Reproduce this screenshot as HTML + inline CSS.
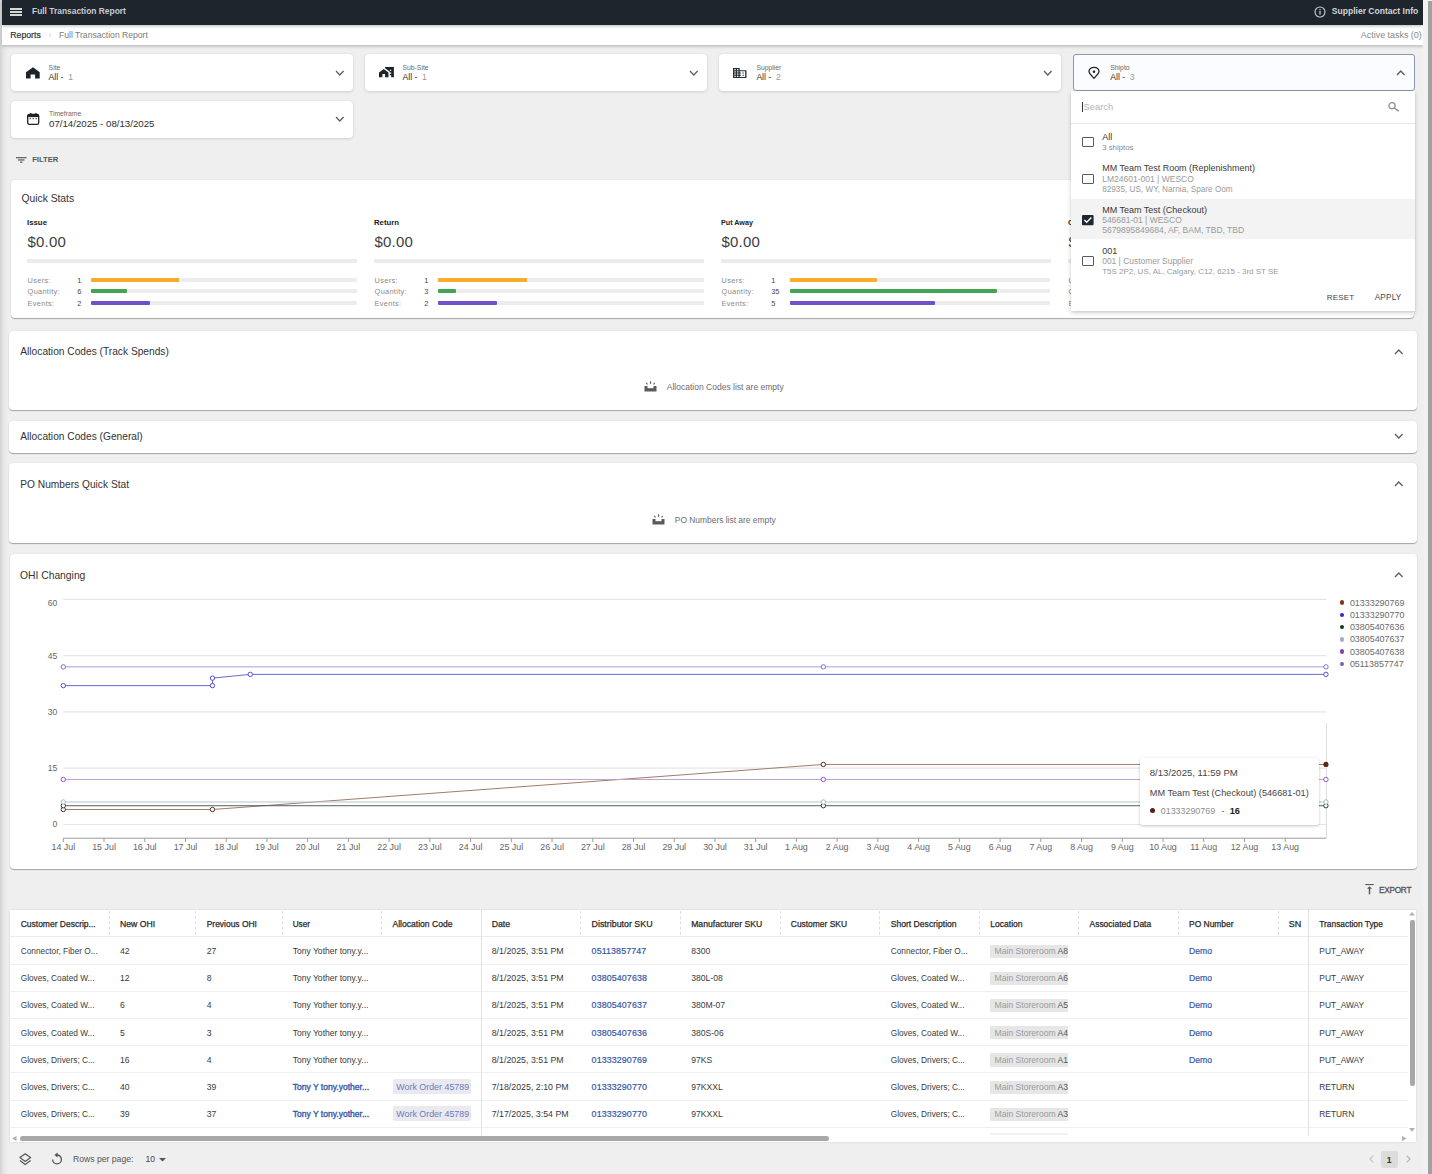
<!DOCTYPE html><html><head><meta charset="utf-8"><style>
*{box-sizing:border-box}
html,body{margin:0;padding:0}
body{width:1432px;height:1174px;overflow:hidden;position:relative;background:#efefef;font-family:"Liberation Sans",sans-serif}
.t{position:absolute;line-height:1;white-space:nowrap}
.r{position:absolute}
.card{position:absolute;background:#fff;border-radius:4px;box-shadow:0 1px 3px rgba(0,0,0,.13),0 0 1.5px rgba(0,0,0,.07)}
.pan{position:absolute;background:#fff;border-radius:4px;box-shadow:0 1px 1px rgba(0,0,0,.30),0 0 2px rgba(0,0,0,.08)}
svg{position:absolute;overflow:visible}
</style></head><body>
<div class="r" style="left:0.00px;top:0.00px;width:9.00px;height:1174.00px;background:linear-gradient(to right,#d2d2d2 0,#dedede 2px,#e8e8e8 4.5px,#eeeeee 8px,#efefef 9px)"></div>
<div class="r" style="left:2.00px;top:24.50px;width:1421.00px;height:20.40px;background:#fff;box-shadow:0 1.5px 3px rgba(0,0,0,.22)"></div>
<div class="r" style="left:2.00px;top:0.00px;width:1421.00px;height:24.50px;background:#1f252d;box-shadow:0 1px 3px rgba(0,0,0,.28)"></div>
<div class="r" style="left:10.20px;top:8.40px;width:11.80px;height:1.60px;background:#d6d8da"></div>
<div class="r" style="left:10.20px;top:11.20px;width:11.80px;height:1.60px;background:#d6d8da"></div>
<div class="r" style="left:10.20px;top:14.00px;width:11.80px;height:1.60px;background:#d6d8da"></div>
<div class="t " style="left:32.00px;top:7.00px;font-size:8.42px;color:#c9cbcd;font-weight:700;">Full Transaction Report</div>
<svg style="left:1314px;top:5.5px" width="12" height="12" viewBox="0 0 12 12"><circle cx="6" cy="6" r="5" fill="none" stroke="#cfd1d3" stroke-width="1.1"/><rect x="5.4" y="5" width="1.2" height="3.6" fill="#cfd1d3"/><rect x="5.4" y="3.2" width="1.2" height="1.1" fill="#cfd1d3"/></svg>
<div class="t " style="left:1331.80px;top:7.00px;font-size:8.56px;color:#d2d4d6;font-weight:700;">Supplier Contact Info</div>
<div class="t " style="left:10.30px;top:31.00px;font-size:8.71px;color:#333;-webkit-text-stroke:0.2px #333">Reports</div>
<div class="t " style="left:48.50px;top:31.00px;font-size:8.5px;color:#c8c8c8;">&rsaquo;</div>
<div class="t " style="left:59.00px;top:31.00px;font-size:8.61px;color:#7a7a7a;">Full Transaction Report</div>
<div class="t " style="right:10.30px;top:31.00px;font-size:8.92px;color:#8a8a8a;">Active tasks (0)</div>
<div class="r" style="left:1423.00px;top:0.00px;width:9.00px;height:1174.00px;background:#f1f1f1"></div>
<div class="r" style="left:1428.20px;top:1.00px;width:3.80px;height:1173.00px;background:#a0a0a0"></div>
<div class="card" style="left:10.80px;top:54px;width:342.5px;height:37px"></div>
<div class="t " style="left:48.60px;top:65.00px;font-size:6.8px;color:#6a6a6a;">Site</div>
<div class="t" style="left:48.60px;top:73px;font-size:8.6px;color:#2e2e2e">All - <span style="color:#9a9a9a">&nbsp;1</span></div>
<svg style="left:334.20px;top:69.00px" width="11.6" height="8.0" viewBox="-5.8 -4.0 11.6 8.0"><path d="M-3.8,-2.0 L0,2.0 L3.8,-2.0" fill="none" stroke="#606060" stroke-width="1.35"/></svg>
<div class="card" style="left:364.70px;top:54px;width:342.5px;height:37px"></div>
<div class="t " style="left:402.50px;top:65.00px;font-size:6.8px;color:#6a6a6a;">Sub-Site</div>
<div class="t" style="left:402.50px;top:73px;font-size:8.6px;color:#2e2e2e">All - <span style="color:#9a9a9a">&nbsp;1</span></div>
<svg style="left:688.10px;top:69.00px" width="11.6" height="8.0" viewBox="-5.8 -4.0 11.6 8.0"><path d="M-3.8,-2.0 L0,2.0 L3.8,-2.0" fill="none" stroke="#606060" stroke-width="1.35"/></svg>
<div class="card" style="left:718.60px;top:54px;width:342.5px;height:37px"></div>
<div class="t " style="left:756.40px;top:65.00px;font-size:6.8px;color:#6a6a6a;">Supplier</div>
<div class="t" style="left:756.40px;top:73px;font-size:8.6px;color:#2e2e2e">All - <span style="color:#9a9a9a">&nbsp;2</span></div>
<svg style="left:1042.00px;top:69.00px" width="11.6" height="8.0" viewBox="-5.8 -4.0 11.6 8.0"><path d="M-3.8,-2.0 L0,2.0 L3.8,-2.0" fill="none" stroke="#606060" stroke-width="1.35"/></svg>
<div class="card" style="left:1072.50px;top:54.2px;width:342.2px;height:36.4px;border:1.2px solid #8f96b0;background:#fbfcff;box-shadow:none;border-radius:3px"></div>
<div class="t " style="left:1110.30px;top:65.00px;font-size:6.8px;color:#6a6a6a;">Shipto</div>
<div class="t" style="left:1110.30px;top:73px;font-size:8.6px;color:#2e2e2e">All - <span style="color:#9a9a9a">&nbsp;3</span></div>
<svg style="left:1395.20px;top:68.80px" width="11.6" height="8.0" viewBox="-5.8 -4.0 11.6 8.0"><path d="M-3.8,2.0 L0,-2.0 L3.8,2.0" fill="none" stroke="#606060" stroke-width="1.35"/></svg>
<svg style="left:26px;top:66.5px" width="14" height="12" viewBox="0 0 14 12"><path d="M7,0.2 L13.7,5.2 L13.7,11.6 L9.1,11.6 L9.1,7.6 L4.6,7.6 L4.6,11.6 L0,11.6 L0,5.2 Z" fill="#1e232b"/></svg>
<svg style="left:378.6px;top:67.3px" width="14.9" height="10.3" viewBox="1 3 22 15.2" preserveAspectRatio="none"><path d="M1 11v7.2h5v-5h4v5h5V11L8 6z M10 3v1.97l7 5V11h2v2h-2v2h2v3.2h4V3H10zm9 6h-2V7h2v2z" fill="#1e232b"/></svg>
<svg style="left:733px;top:67.7px" width="13.5" height="10" viewBox="2 3 20 18" preserveAspectRatio="none"><path d="M12 7V3H2v18h20V7H12zM6 19H4v-2h2v2zm0-4H4v-2h2v2zm0-4H4V9h2v2zm0-4H4V5h2v2zm4 12H8v-2h2v2zm0-4H8v-2h2v2zm0-4H8V9h2v2zm0-4H8V5h2v2zm10 12h-8v-2h2v-2h-2v-2h2v-2h-2V9h8v10zm-2-8h-2v2h2v-2zm0 4h-2v2h2v-2z" fill="#2a2f36"/></svg>
<svg style="left:1088.2px;top:66.5px" width="12" height="12" viewBox="0 0 12 12"><path d="M6,11.3 C3.4,8.6 1,6.5 1,4.6 A5,4.3 0 0 1 11,4.6 C11,6.5 8.6,8.6 6,11.3 Z" fill="none" stroke="#222" stroke-width="1.3"/><circle cx="6" cy="4.7" r="1.25" fill="#222"/></svg>
<div class="card" style="left:10.8px;top:101px;width:342.5px;height:37px"></div>
<svg style="left:26.8px;top:113px" width="12.5" height="12" viewBox="0 0 12.5 12"><rect x="0.7" y="1.5" width="11" height="9.8" rx="1.6" fill="none" stroke="#222" stroke-width="1.3"/><rect x="0.7" y="1.5" width="11" height="2.6" fill="#222"/><rect x="3" y="0" width="1.4" height="2" fill="#222"/><rect x="8.2" y="0" width="1.4" height="2" fill="#222"/><rect x="2.5" y="5.2" width="1.4" height="1" fill="#333"/><rect x="5.5" y="5.2" width="1.4" height="1" fill="#333"/><rect x="8.5" y="5.2" width="1.4" height="1" fill="#333"/></svg>
<div class="t " style="left:49.00px;top:111.00px;font-size:6.8px;color:#6a6a6a;">Timeframe</div>
<div class="t " style="left:49.00px;top:119.00px;font-size:9.68px;color:#2e2e2e;">07/14/2025 - 08/13/2025</div>
<svg style="left:334.20px;top:115.30px" width="11.6" height="8.0" viewBox="-5.8 -4.0 11.6 8.0"><path d="M-3.8,-2.0 L0,2.0 L3.8,-2.0" fill="none" stroke="#606060" stroke-width="1.35"/></svg>
<svg style="left:15.6px;top:156.6px" width="10.5" height="6" viewBox="0 0 10.5 6"><rect x="0" y="0" width="10.5" height="1.3" fill="#666"/><rect x="2" y="2.3" width="6.5" height="1.3" fill="#666"/><rect x="4" y="4.5" width="2.5" height="1.3" fill="#666"/></svg>
<div class="t " style="left:32.20px;top:156.00px;font-size:7.6px;color:#555;font-weight:700;">FILTER</div>
<div class="pan" style="left:10.7px;top:180.4px;width:1403.7px;height:137.6px"></div>
<div class="t " style="left:21.50px;top:194.00px;font-size:10.29px;color:#333;">Quick Stats</div>
<div class="t " style="left:27.00px;top:219.00px;font-size:7.82px;color:#222;font-weight:700;">Issue</div>
<div class="t " style="left:27.40px;top:234.00px;font-size:15.0px;color:#3d3d3d;letter-spacing:0.25px">$0.00</div>
<div class="r" style="left:27.00px;top:258.80px;width:329.50px;height:3.80px;background:#ebebeb"></div>
<div class="t " style="left:27.60px;top:277.00px;font-size:7.4px;color:#8a8a8a;letter-spacing:0.3px">Users:</div>
<div class="t " style="left:77.20px;top:277.00px;font-size:7.4px;color:#444;">1</div>
<div class="r" style="left:91.00px;top:277.90px;width:265.50px;height:4.10px;background:#ececec;border-radius:1px"></div>
<div class="r" style="left:91.00px;top:277.90px;width:88.00px;height:4.10px;background:#f7ad2a;border-radius:1px"></div>
<div class="t " style="left:27.60px;top:288.00px;font-size:7.4px;color:#8a8a8a;letter-spacing:0.3px">Quantity:</div>
<div class="t " style="left:77.20px;top:288.00px;font-size:7.4px;color:#444;">6</div>
<div class="r" style="left:91.00px;top:289.40px;width:265.50px;height:4.10px;background:#ececec;border-radius:1px"></div>
<div class="r" style="left:91.00px;top:289.40px;width:36.00px;height:4.10px;background:#43a553;border-radius:1px"></div>
<div class="t " style="left:27.60px;top:300.00px;font-size:7.4px;color:#8a8a8a;letter-spacing:0.3px">Events:</div>
<div class="t " style="left:77.20px;top:300.00px;font-size:7.4px;color:#444;">2</div>
<div class="r" style="left:91.00px;top:300.90px;width:265.50px;height:4.10px;background:#ececec;border-radius:1px"></div>
<div class="r" style="left:91.00px;top:300.90px;width:58.50px;height:4.10px;background:#6f52c9;border-radius:1px"></div>
<div class="t " style="left:374.00px;top:219.00px;font-size:7.76px;color:#222;font-weight:700;">Return</div>
<div class="t " style="left:374.40px;top:234.00px;font-size:15.0px;color:#3d3d3d;letter-spacing:0.25px">$0.00</div>
<div class="r" style="left:374.00px;top:258.80px;width:329.50px;height:3.80px;background:#ebebeb"></div>
<div class="t " style="left:374.60px;top:277.00px;font-size:7.4px;color:#8a8a8a;letter-spacing:0.3px">Users:</div>
<div class="t " style="left:424.20px;top:277.00px;font-size:7.4px;color:#444;">1</div>
<div class="r" style="left:438.00px;top:277.90px;width:265.50px;height:4.10px;background:#ececec;border-radius:1px"></div>
<div class="r" style="left:438.00px;top:277.90px;width:89.00px;height:4.10px;background:#f7ad2a;border-radius:1px"></div>
<div class="t " style="left:374.60px;top:288.00px;font-size:7.4px;color:#8a8a8a;letter-spacing:0.3px">Quantity:</div>
<div class="t " style="left:424.20px;top:288.00px;font-size:7.4px;color:#444;">3</div>
<div class="r" style="left:438.00px;top:289.40px;width:265.50px;height:4.10px;background:#ececec;border-radius:1px"></div>
<div class="r" style="left:438.00px;top:289.40px;width:18.00px;height:4.10px;background:#43a553;border-radius:1px"></div>
<div class="t " style="left:374.60px;top:300.00px;font-size:7.4px;color:#8a8a8a;letter-spacing:0.3px">Events:</div>
<div class="t " style="left:424.20px;top:300.00px;font-size:7.4px;color:#444;">2</div>
<div class="r" style="left:438.00px;top:300.90px;width:265.50px;height:4.10px;background:#ececec;border-radius:1px"></div>
<div class="r" style="left:438.00px;top:300.90px;width:59.40px;height:4.10px;background:#6f52c9;border-radius:1px"></div>
<div class="t " style="left:721.00px;top:219.00px;font-size:7.2px;color:#222;font-weight:700;">Put Away</div>
<div class="t " style="left:721.40px;top:234.00px;font-size:15.0px;color:#3d3d3d;letter-spacing:0.25px">$0.00</div>
<div class="r" style="left:721.00px;top:258.80px;width:329.50px;height:3.80px;background:#ebebeb"></div>
<div class="t " style="left:721.60px;top:277.00px;font-size:7.4px;color:#8a8a8a;letter-spacing:0.3px">Users:</div>
<div class="t " style="left:771.20px;top:277.00px;font-size:7.4px;color:#444;">1</div>
<div class="r" style="left:789.90px;top:277.90px;width:260.60px;height:4.10px;background:#ececec;border-radius:1px"></div>
<div class="r" style="left:789.90px;top:277.90px;width:86.90px;height:4.10px;background:#f7ad2a;border-radius:1px"></div>
<div class="t " style="left:721.60px;top:288.00px;font-size:7.4px;color:#8a8a8a;letter-spacing:0.3px">Quantity:</div>
<div class="t " style="left:771.20px;top:288.00px;font-size:7.4px;color:#444;">35</div>
<div class="r" style="left:789.90px;top:289.40px;width:260.60px;height:4.10px;background:#ececec;border-radius:1px"></div>
<div class="r" style="left:789.90px;top:289.40px;width:207.60px;height:4.10px;background:#43a553;border-radius:1px"></div>
<div class="t " style="left:721.60px;top:300.00px;font-size:7.4px;color:#8a8a8a;letter-spacing:0.3px">Events:</div>
<div class="t " style="left:771.20px;top:300.00px;font-size:7.4px;color:#444;">5</div>
<div class="r" style="left:789.90px;top:300.90px;width:260.60px;height:4.10px;background:#ececec;border-radius:1px"></div>
<div class="r" style="left:789.90px;top:300.90px;width:144.80px;height:4.10px;background:#6f52c9;border-radius:1px"></div>
<div class="t " style="left:1068.00px;top:219.00px;font-size:7.5px;color:#222;font-weight:700;">Check Out</div>
<div class="t " style="left:1068.40px;top:234.00px;font-size:15.0px;color:#3d3d3d;letter-spacing:0.25px">$0.00</div>
<div class="r" style="left:1068.00px;top:258.80px;width:329.50px;height:3.80px;background:#ebebeb"></div>
<div class="t " style="left:1068.60px;top:277.00px;font-size:7.4px;color:#8a8a8a;letter-spacing:0.3px">Users:</div>
<div class="t " style="left:1118.20px;top:277.00px;font-size:7.4px;color:#444;">1</div>
<div class="r" style="left:1132.00px;top:277.90px;width:265.50px;height:4.10px;background:#ececec;border-radius:1px"></div>
<div class="r" style="left:1132.00px;top:277.90px;width:88.00px;height:4.10px;background:#f7ad2a;border-radius:1px"></div>
<div class="t " style="left:1068.60px;top:288.00px;font-size:7.4px;color:#8a8a8a;letter-spacing:0.3px">Quantity:</div>
<div class="t " style="left:1118.20px;top:288.00px;font-size:7.4px;color:#444;">0</div>
<div class="r" style="left:1132.00px;top:289.40px;width:265.50px;height:4.10px;background:#ececec;border-radius:1px"></div>
<div class="t " style="left:1068.60px;top:300.00px;font-size:7.4px;color:#8a8a8a;letter-spacing:0.3px">Events:</div>
<div class="t " style="left:1118.20px;top:300.00px;font-size:7.4px;color:#444;">0</div>
<div class="r" style="left:1132.00px;top:300.90px;width:265.50px;height:4.10px;background:#ececec;border-radius:1px"></div>
<div class="pan" style="left:9.1px;top:330.7px;width:1407.6px;height:79.20px"></div>
<div class="t " style="left:20.30px;top:347.00px;font-size:10.2px;color:#333;">Allocation Codes (Track Spends)</div>
<svg style="left:1392.70px;top:347.60px" width="11.6" height="8.0" viewBox="-5.8 -4.0 11.6 8.0"><path d="M-3.8,2.0 L0,-2.0 L3.8,2.0" fill="none" stroke="#606060" stroke-width="1.35"/></svg>
<div class="pan" style="left:9.1px;top:421.0px;width:1407.6px;height:31.70px"></div>
<div class="t " style="left:20.30px;top:432.00px;font-size:10.2px;color:#333;">Allocation Codes (General)</div>
<svg style="left:1392.70px;top:432.20px" width="11.6" height="8.0" viewBox="-5.8 -4.0 11.6 8.0"><path d="M-3.8,-2.0 L0,2.0 L3.8,-2.0" fill="none" stroke="#606060" stroke-width="1.35"/></svg>
<div class="pan" style="left:9.1px;top:463.3px;width:1407.6px;height:79.80px"></div>
<div class="t " style="left:20.30px;top:480.00px;font-size:10.2px;color:#333;">PO Numbers Quick Stat</div>
<svg style="left:1392.70px;top:480.20px" width="11.6" height="8.0" viewBox="-5.8 -4.0 11.6 8.0"><path d="M-3.8,2.0 L0,-2.0 L3.8,2.0" fill="none" stroke="#606060" stroke-width="1.35"/></svg>
<svg style="left:644.2px;top:381.2px" width="13" height="11" viewBox="0 0 13 11"><path d="M0.5,5 L12.5,5 L12.5,10.5 L0.5,10.5 Z" fill="#5a5a5a"/><path d="M3.5,5 L3.5,7.2 L9.5,7.2 L9.5,5" fill="#fff"/><rect x="6" y="0.3" width="1.1" height="2.6" fill="#5a5a5a"/><rect x="2.3" y="1.6" width="1.1" height="2.1" fill="#5a5a5a" transform="rotate(-30 2.8 2.6)"/><rect x="9.6" y="1.6" width="1.1" height="2.1" fill="#5a5a5a" transform="rotate(30 10.1 2.6)"/></svg>
<div class="t " style="left:666.80px;top:383.00px;font-size:8.52px;color:#6e6e6e;">Allocation Codes list are empty</div>
<svg style="left:652px;top:514.2px" width="13" height="11" viewBox="0 0 13 11"><path d="M0.5,5 L12.5,5 L12.5,10.5 L0.5,10.5 Z" fill="#5a5a5a"/><path d="M3.5,5 L3.5,7.2 L9.5,7.2 L9.5,5" fill="#fff"/><rect x="6" y="0.3" width="1.1" height="2.6" fill="#5a5a5a"/><rect x="2.3" y="1.6" width="1.1" height="2.1" fill="#5a5a5a" transform="rotate(-30 2.8 2.6)"/><rect x="9.6" y="1.6" width="1.1" height="2.1" fill="#5a5a5a" transform="rotate(30 10.1 2.6)"/></svg>
<div class="t " style="left:674.80px;top:516.00px;font-size:8.41px;color:#6e6e6e;">PO Numbers list are empty</div>
<div class="pan" style="left:9.5px;top:554px;width:1407.2px;height:315.1px"></div>
<div class="t " style="left:20.00px;top:571.00px;font-size:10.32px;color:#333;">OHI Changing</div>
<svg style="left:1392.70px;top:570.80px" width="11.6" height="8.0" viewBox="-5.8 -4.0 11.6 8.0"><path d="M-3.8,2.0 L0,-2.0 L3.8,2.0" fill="none" stroke="#606060" stroke-width="1.35"/></svg>
<svg style="left:0;top:0" width="1432" height="1174" viewBox="0 0 1432 1174"><line x1="63.3" y1="824.50" x2="1326.4" y2="824.50" stroke="#e6e6e6" stroke-width="1.2"/><line x1="63.3" y1="768.20" x2="1326.4" y2="768.20" stroke="#e6e6e6" stroke-width="1.2"/><line x1="63.3" y1="711.90" x2="1326.4" y2="711.90" stroke="#e6e6e6" stroke-width="1.2"/><line x1="63.3" y1="655.60" x2="1326.4" y2="655.60" stroke="#e6e6e6" stroke-width="1.2"/><line x1="63.3" y1="599.30" x2="1326.4" y2="599.30" stroke="#e6e6e6" stroke-width="1.2"/><line x1="63.3" y1="838.2" x2="1326.4" y2="838.2" stroke="#9a9a9a" stroke-width="1"/><line x1="63.30" y1="838.2" x2="63.30" y2="842" stroke="#9a9a9a" stroke-width="1"/><line x1="104.03" y1="838.2" x2="104.03" y2="842" stroke="#9a9a9a" stroke-width="1"/><line x1="144.76" y1="838.2" x2="144.76" y2="842" stroke="#9a9a9a" stroke-width="1"/><line x1="185.49" y1="838.2" x2="185.49" y2="842" stroke="#9a9a9a" stroke-width="1"/><line x1="226.22" y1="838.2" x2="226.22" y2="842" stroke="#9a9a9a" stroke-width="1"/><line x1="266.95" y1="838.2" x2="266.95" y2="842" stroke="#9a9a9a" stroke-width="1"/><line x1="307.68" y1="838.2" x2="307.68" y2="842" stroke="#9a9a9a" stroke-width="1"/><line x1="348.41" y1="838.2" x2="348.41" y2="842" stroke="#9a9a9a" stroke-width="1"/><line x1="389.14" y1="838.2" x2="389.14" y2="842" stroke="#9a9a9a" stroke-width="1"/><line x1="429.87" y1="838.2" x2="429.87" y2="842" stroke="#9a9a9a" stroke-width="1"/><line x1="470.60" y1="838.2" x2="470.60" y2="842" stroke="#9a9a9a" stroke-width="1"/><line x1="511.33" y1="838.2" x2="511.33" y2="842" stroke="#9a9a9a" stroke-width="1"/><line x1="552.06" y1="838.2" x2="552.06" y2="842" stroke="#9a9a9a" stroke-width="1"/><line x1="592.79" y1="838.2" x2="592.79" y2="842" stroke="#9a9a9a" stroke-width="1"/><line x1="633.52" y1="838.2" x2="633.52" y2="842" stroke="#9a9a9a" stroke-width="1"/><line x1="674.25" y1="838.2" x2="674.25" y2="842" stroke="#9a9a9a" stroke-width="1"/><line x1="714.98" y1="838.2" x2="714.98" y2="842" stroke="#9a9a9a" stroke-width="1"/><line x1="755.71" y1="838.2" x2="755.71" y2="842" stroke="#9a9a9a" stroke-width="1"/><line x1="796.44" y1="838.2" x2="796.44" y2="842" stroke="#9a9a9a" stroke-width="1"/><line x1="837.17" y1="838.2" x2="837.17" y2="842" stroke="#9a9a9a" stroke-width="1"/><line x1="877.90" y1="838.2" x2="877.90" y2="842" stroke="#9a9a9a" stroke-width="1"/><line x1="918.63" y1="838.2" x2="918.63" y2="842" stroke="#9a9a9a" stroke-width="1"/><line x1="959.36" y1="838.2" x2="959.36" y2="842" stroke="#9a9a9a" stroke-width="1"/><line x1="1000.09" y1="838.2" x2="1000.09" y2="842" stroke="#9a9a9a" stroke-width="1"/><line x1="1040.82" y1="838.2" x2="1040.82" y2="842" stroke="#9a9a9a" stroke-width="1"/><line x1="1081.55" y1="838.2" x2="1081.55" y2="842" stroke="#9a9a9a" stroke-width="1"/><line x1="1122.28" y1="838.2" x2="1122.28" y2="842" stroke="#9a9a9a" stroke-width="1"/><line x1="1163.01" y1="838.2" x2="1163.01" y2="842" stroke="#9a9a9a" stroke-width="1"/><line x1="1203.74" y1="838.2" x2="1203.74" y2="842" stroke="#9a9a9a" stroke-width="1"/><line x1="1244.47" y1="838.2" x2="1244.47" y2="842" stroke="#9a9a9a" stroke-width="1"/><line x1="1285.20" y1="838.2" x2="1285.20" y2="842" stroke="#9a9a9a" stroke-width="1"/><line x1="1326.4" y1="723" x2="1326.4" y2="838" stroke="#dcdcdc" stroke-width="1"/><polyline points="63.30,809.49 212.47,809.49 823.34,764.45 1325.93,764.45" fill="none" stroke="#a27c6a" stroke-width="1"/><polyline points="63.30,685.63 212.47,685.63 212.47,678.12 250.27,674.37 1325.93,674.37" fill="none" stroke="#6767d9" stroke-width="1"/><polyline points="63.30,805.73 823.34,805.73 1325.93,805.73" fill="none" stroke="#52625a" stroke-width="1"/><polyline points="63.30,801.98 823.34,801.98 1325.93,801.98" fill="none" stroke="#b8c6d0" stroke-width="1"/><polyline points="63.30,779.46 823.34,779.46 1325.93,779.46" fill="none" stroke="#b9a2cc" stroke-width="1"/><polyline points="63.30,666.86 823.34,666.86 1325.93,666.86" fill="none" stroke="#a3a0d6" stroke-width="1"/><circle cx="63.30" cy="809.49" r="2.2" fill="#fff" stroke="#5a2d12" stroke-width="1"/><circle cx="212.47" cy="809.49" r="2.2" fill="#fff" stroke="#5a2d12" stroke-width="1"/><circle cx="823.34" cy="764.45" r="2.2" fill="#fff" stroke="#5a2d12" stroke-width="1"/><circle cx="63.30" cy="685.63" r="2.2" fill="#fff" stroke="#5050d0" stroke-width="1"/><circle cx="212.47" cy="685.63" r="2.2" fill="#fff" stroke="#5050d0" stroke-width="1"/><circle cx="212.47" cy="678.12" r="2.2" fill="#fff" stroke="#5050d0" stroke-width="1"/><circle cx="250.27" cy="674.37" r="2.2" fill="#fff" stroke="#5050d0" stroke-width="1"/><circle cx="1325.93" cy="674.37" r="2.2" fill="#fff" stroke="#5050d0" stroke-width="1"/><circle cx="63.30" cy="805.73" r="2.2" fill="#fff" stroke="#2d3b31" stroke-width="1"/><circle cx="823.34" cy="805.73" r="2.2" fill="#fff" stroke="#2d3b31" stroke-width="1"/><circle cx="1325.93" cy="805.73" r="2.2" fill="#fff" stroke="#2d3b31" stroke-width="1"/><circle cx="63.30" cy="801.98" r="2.2" fill="#fff" stroke="#a9b8c4" stroke-width="1"/><circle cx="823.34" cy="801.98" r="2.2" fill="#fff" stroke="#a9b8c4" stroke-width="1"/><circle cx="1325.93" cy="801.98" r="2.2" fill="#fff" stroke="#a9b8c4" stroke-width="1"/><circle cx="63.30" cy="779.46" r="2.2" fill="#fff" stroke="#9b55c8" stroke-width="1"/><circle cx="823.34" cy="779.46" r="2.2" fill="#fff" stroke="#9b55c8" stroke-width="1"/><circle cx="1325.93" cy="779.46" r="2.2" fill="#fff" stroke="#9b55c8" stroke-width="1"/><circle cx="63.30" cy="666.86" r="2.2" fill="#fff" stroke="#7a78cf" stroke-width="1"/><circle cx="823.34" cy="666.86" r="2.2" fill="#fff" stroke="#7a78cf" stroke-width="1"/><circle cx="1325.93" cy="666.86" r="2.2" fill="#fff" stroke="#7a78cf" stroke-width="1"/><circle cx="1325.93" cy="764.45" r="2.6" fill="#5a2d12"/></svg>
<div class="t " style="right:1374.80px;top:820.00px;font-size:8.6px;color:#666;">0</div>
<div class="t " style="right:1374.80px;top:764.00px;font-size:8.6px;color:#666;">15</div>
<div class="t " style="right:1374.80px;top:708.00px;font-size:8.6px;color:#666;">30</div>
<div class="t " style="right:1374.80px;top:652.00px;font-size:8.6px;color:#666;">45</div>
<div class="t " style="right:1374.80px;top:599.00px;font-size:8.6px;color:#666;">60</div>
<div class="t" style="left:33.30px;width:60px;text-align:center;top:843px;font-size:8.9px;color:#666">14 Jul</div>
<div class="t" style="left:74.03px;width:60px;text-align:center;top:843px;font-size:8.9px;color:#666">15 Jul</div>
<div class="t" style="left:114.76px;width:60px;text-align:center;top:843px;font-size:8.9px;color:#666">16 Jul</div>
<div class="t" style="left:155.49px;width:60px;text-align:center;top:843px;font-size:8.9px;color:#666">17 Jul</div>
<div class="t" style="left:196.22px;width:60px;text-align:center;top:843px;font-size:8.9px;color:#666">18 Jul</div>
<div class="t" style="left:236.95px;width:60px;text-align:center;top:843px;font-size:8.9px;color:#666">19 Jul</div>
<div class="t" style="left:277.68px;width:60px;text-align:center;top:843px;font-size:8.9px;color:#666">20 Jul</div>
<div class="t" style="left:318.41px;width:60px;text-align:center;top:843px;font-size:8.9px;color:#666">21 Jul</div>
<div class="t" style="left:359.14px;width:60px;text-align:center;top:843px;font-size:8.9px;color:#666">22 Jul</div>
<div class="t" style="left:399.87px;width:60px;text-align:center;top:843px;font-size:8.9px;color:#666">23 Jul</div>
<div class="t" style="left:440.60px;width:60px;text-align:center;top:843px;font-size:8.9px;color:#666">24 Jul</div>
<div class="t" style="left:481.33px;width:60px;text-align:center;top:843px;font-size:8.9px;color:#666">25 Jul</div>
<div class="t" style="left:522.06px;width:60px;text-align:center;top:843px;font-size:8.9px;color:#666">26 Jul</div>
<div class="t" style="left:562.79px;width:60px;text-align:center;top:843px;font-size:8.9px;color:#666">27 Jul</div>
<div class="t" style="left:603.52px;width:60px;text-align:center;top:843px;font-size:8.9px;color:#666">28 Jul</div>
<div class="t" style="left:644.25px;width:60px;text-align:center;top:843px;font-size:8.9px;color:#666">29 Jul</div>
<div class="t" style="left:684.98px;width:60px;text-align:center;top:843px;font-size:8.9px;color:#666">30 Jul</div>
<div class="t" style="left:725.71px;width:60px;text-align:center;top:843px;font-size:8.9px;color:#666">31 Jul</div>
<div class="t" style="left:766.44px;width:60px;text-align:center;top:843px;font-size:8.9px;color:#666">1 Aug</div>
<div class="t" style="left:807.17px;width:60px;text-align:center;top:843px;font-size:8.9px;color:#666">2 Aug</div>
<div class="t" style="left:847.90px;width:60px;text-align:center;top:843px;font-size:8.9px;color:#666">3 Aug</div>
<div class="t" style="left:888.63px;width:60px;text-align:center;top:843px;font-size:8.9px;color:#666">4 Aug</div>
<div class="t" style="left:929.36px;width:60px;text-align:center;top:843px;font-size:8.9px;color:#666">5 Aug</div>
<div class="t" style="left:970.09px;width:60px;text-align:center;top:843px;font-size:8.9px;color:#666">6 Aug</div>
<div class="t" style="left:1010.82px;width:60px;text-align:center;top:843px;font-size:8.9px;color:#666">7 Aug</div>
<div class="t" style="left:1051.55px;width:60px;text-align:center;top:843px;font-size:8.9px;color:#666">8 Aug</div>
<div class="t" style="left:1092.28px;width:60px;text-align:center;top:843px;font-size:8.9px;color:#666">9 Aug</div>
<div class="t" style="left:1133.01px;width:60px;text-align:center;top:843px;font-size:8.9px;color:#666">10 Aug</div>
<div class="t" style="left:1173.74px;width:60px;text-align:center;top:843px;font-size:8.9px;color:#666">11 Aug</div>
<div class="t" style="left:1214.47px;width:60px;text-align:center;top:843px;font-size:8.9px;color:#666">12 Aug</div>
<div class="t" style="left:1255.20px;width:60px;text-align:center;top:843px;font-size:8.9px;color:#666">13 Aug</div>
<div class="r" style="left:1339.7px;top:600.30px;width:4.6px;height:4.6px;border-radius:50%;background:#7b3b1a"></div>
<div class="t " style="left:1349.90px;top:599.00px;font-size:8.91px;color:#6a6a6a;">01333290769</div>
<div class="r" style="left:1339.7px;top:612.54px;width:4.6px;height:4.6px;border-radius:50%;background:#2a2acc"></div>
<div class="t " style="left:1349.90px;top:611.00px;font-size:8.91px;color:#6a6a6a;">01333290770</div>
<div class="r" style="left:1339.7px;top:624.78px;width:4.6px;height:4.6px;border-radius:50%;background:#0d3a22"></div>
<div class="t " style="left:1349.90px;top:623.00px;font-size:8.91px;color:#6a6a6a;">03805407636</div>
<div class="r" style="left:1339.7px;top:637.02px;width:4.6px;height:4.6px;border-radius:50%;background:#a6aebd"></div>
<div class="t " style="left:1349.90px;top:635.00px;font-size:8.91px;color:#6a6a6a;">03805407637</div>
<div class="r" style="left:1339.7px;top:649.26px;width:4.6px;height:4.6px;border-radius:50%;background:#8e3fb2"></div>
<div class="t " style="left:1349.90px;top:648.00px;font-size:8.91px;color:#6a6a6a;">03805407638</div>
<div class="r" style="left:1339.7px;top:661.50px;width:4.6px;height:4.6px;border-radius:50%;background:#6b64b9"></div>
<div class="t " style="left:1349.90px;top:660.00px;font-size:8.91px;color:#6a6a6a;">05113857747</div>
<div class="r" style="left:1139.5px;top:758px;width:179.7px;height:67.3px;background:#fff;box-shadow:0 1px 3px rgba(0,0,0,.25);border-radius:2px"></div>
<div class="t " style="left:1149.80px;top:768.00px;font-size:9.55px;color:#444;">8/13/2025, 11:59 PM</div>
<div class="t " style="left:1149.80px;top:789.00px;font-size:9.16px;color:#444;">MM Team Test (Checkout) (546681-01)</div>
<div class="r" style="left:1149.8px;top:807.8px;width:5.2px;height:5.2px;border-radius:50%;background:#5a2010"></div>
<div class="t " style="left:1160.80px;top:807.00px;font-size:8.9px;color:#8e8e8e;">01333290769</div>
<div class="t " style="left:1221.50px;top:807.00px;font-size:8.9px;color:#555;">-</div>
<div class="t " style="left:1229.70px;top:807.00px;font-size:9.2px;color:#222;font-weight:700;">16</div>
<svg style="left:1365px;top:883.6px" width="9" height="10.5" viewBox="0 0 9 10.5"><rect x="0.3" y="0" width="8.4" height="1.1" fill="#555"/><path d="M4.5,2.2 L7,4.8 L5.2,4.8 L5.2,10.3 L3.8,10.3 L3.8,4.8 L2,4.8 Z" fill="#555"/></svg>
<div class="t " style="left:1379.00px;top:886.00px;font-size:8.3px;color:#555;letter-spacing:-0.3px;-webkit-text-stroke:0.3px #555">EXPORT</div>
<div class="r" style="left:10px;top:909.8px;width:1405.8px;height:232.3px;background:#fff;box-shadow:0 0 2px rgba(0,0,0,.12)"></div>
<div class="r" style="left:10.00px;top:935.60px;width:1398.00px;height:1.00px;background:#ececec"></div>
<div class="r" style="left:10.00px;top:963.67px;width:1398.00px;height:1.00px;background:#efefef"></div>
<div class="r" style="left:10.00px;top:990.84px;width:1398.00px;height:1.00px;background:#efefef"></div>
<div class="r" style="left:10.00px;top:1018.01px;width:1398.00px;height:1.00px;background:#efefef"></div>
<div class="r" style="left:10.00px;top:1045.18px;width:1398.00px;height:1.00px;background:#efefef"></div>
<div class="r" style="left:10.00px;top:1072.35px;width:1398.00px;height:1.00px;background:#efefef"></div>
<div class="r" style="left:10.00px;top:1099.52px;width:1398.00px;height:1.00px;background:#efefef"></div>
<div class="r" style="left:10.00px;top:1126.69px;width:1398.00px;height:1.00px;background:#efefef"></div>
<div class="r" style="left:109.30px;top:911px;width:0;height:24px;border-left:1px dashed #dedede"></div>
<div class="r" style="left:195.00px;top:911px;width:0;height:24px;border-left:1px dashed #dedede"></div>
<div class="r" style="left:281.60px;top:911px;width:0;height:24px;border-left:1px dashed #dedede"></div>
<div class="r" style="left:381.10px;top:911px;width:0;height:24px;border-left:1px dashed #dedede"></div>
<div class="r" style="left:580.10px;top:911px;width:0;height:24px;border-left:1px dashed #dedede"></div>
<div class="r" style="left:680.00px;top:911px;width:0;height:24px;border-left:1px dashed #dedede"></div>
<div class="r" style="left:779.50px;top:911px;width:0;height:24px;border-left:1px dashed #dedede"></div>
<div class="r" style="left:879.10px;top:911px;width:0;height:24px;border-left:1px dashed #dedede"></div>
<div class="r" style="left:978.60px;top:911px;width:0;height:24px;border-left:1px dashed #dedede"></div>
<div class="r" style="left:1078.20px;top:911px;width:0;height:24px;border-left:1px dashed #dedede"></div>
<div class="r" style="left:1177.70px;top:911px;width:0;height:24px;border-left:1px dashed #dedede"></div>
<div class="r" style="left:1277.50px;top:911px;width:0;height:24px;border-left:1px dashed #dedede"></div>
<div class="r" style="left:480.80px;top:909.30px;width:1.00px;height:225.70px;background:#e2e2e2"></div>
<div class="r" style="left:1308.20px;top:909.30px;width:1.00px;height:225.70px;background:#e2e2e2"></div>
<div class="t " style="left:20.70px;top:920.00px;font-size:8.49px;color:#2a2a2a;-webkit-text-stroke:0.25px #2a2a2a">Customer Descrip...</div>
<div class="t " style="left:120.10px;top:920.00px;font-size:8.63px;color:#2a2a2a;-webkit-text-stroke:0.25px #2a2a2a">New OHI</div>
<div class="t " style="left:206.70px;top:920.00px;font-size:8.46px;color:#2a2a2a;-webkit-text-stroke:0.25px #2a2a2a">Previous OHI</div>
<div class="t " style="left:292.70px;top:921.00px;font-size:8.19px;color:#2a2a2a;-webkit-text-stroke:0.25px #2a2a2a">User</div>
<div class="t " style="left:392.50px;top:920.00px;font-size:8.57px;color:#2a2a2a;-webkit-text-stroke:0.25px #2a2a2a">Allocation Code</div>
<div class="t " style="left:491.70px;top:920.00px;font-size:8.76px;color:#2a2a2a;-webkit-text-stroke:0.25px #2a2a2a">Date</div>
<div class="t " style="left:591.60px;top:920.00px;font-size:8.85px;color:#2a2a2a;-webkit-text-stroke:0.25px #2a2a2a">Distributor SKU</div>
<div class="t " style="left:691.20px;top:920.00px;font-size:8.63px;color:#2a2a2a;-webkit-text-stroke:0.25px #2a2a2a">Manufacturer SKU</div>
<div class="t " style="left:790.80px;top:920.00px;font-size:8.44px;color:#2a2a2a;-webkit-text-stroke:0.25px #2a2a2a">Customer SKU</div>
<div class="t " style="left:890.70px;top:920.00px;font-size:8.6px;color:#2a2a2a;-webkit-text-stroke:0.25px #2a2a2a">Short Description</div>
<div class="t " style="left:990.30px;top:920.00px;font-size:8.54px;color:#2a2a2a;-webkit-text-stroke:0.25px #2a2a2a">Location</div>
<div class="t " style="left:1089.50px;top:920.00px;font-size:8.47px;color:#2a2a2a;-webkit-text-stroke:0.25px #2a2a2a">Associated Data</div>
<div class="t " style="left:1189.00px;top:920.00px;font-size:8.45px;color:#2a2a2a;-webkit-text-stroke:0.25px #2a2a2a">PO Number</div>
<div class="t " style="left:1288.80px;top:920.00px;font-size:9.0px;color:#2a2a2a;-webkit-text-stroke:0.25px #2a2a2a">SN</div>
<div class="t " style="left:1319.30px;top:920.00px;font-size:8.35px;color:#2a2a2a;-webkit-text-stroke:0.25px #2a2a2a">Transaction Type</div>
<div class="t " style="left:20.70px;top:947.00px;font-size:8.3px;color:#3a3a3a;">Connector, Fiber O...</div>
<div class="t " style="left:120.10px;top:947.00px;font-size:8.6px;color:#3a3a3a;">42</div>
<div class="t " style="left:206.70px;top:947.00px;font-size:8.6px;color:#3a3a3a;">27</div>
<div class="t " style="left:292.70px;top:947.00px;font-size:8.56px;color:#3a3a3a;">Tony Yother tony.y...</div>
<div class="t " style="left:491.70px;top:947.00px;font-size:8.82px;color:#3a3a3a;">8/1/2025, 3:51 PM</div>
<div class="t " style="left:591.60px;top:947.00px;font-size:8.9px;color:#3558a8;letter-spacing:0.1px;-webkit-text-stroke:0.2px #3558a8">05113857747</div>
<div class="t " style="left:691.20px;top:947.00px;font-size:8.6px;color:#3a3a3a;">8300</div>
<div class="t " style="left:890.70px;top:947.00px;font-size:8.3px;color:#3a3a3a;">Connector, Fiber O...</div>
<div class="r" style="left:990.30px;top:944.70px;width:77.80px;height:13.20px;background:#e6e6e6;border-radius:1px"></div>
<div class="t" style="left:994.6px;top:947px;font-size:8.59px;color:#9a9a9a">Main Storeroom <span style="color:#555">A8</span></div>
<div class="t " style="left:1189.00px;top:947.00px;font-size:8.62px;color:#3558a8;-webkit-text-stroke:0.2px #3558a8">Demo</div>
<div class="t " style="left:1319.30px;top:947.00px;font-size:8.4px;color:#3a3a3a;">PUT_AWAY</div>
<div class="t " style="left:20.70px;top:974.00px;font-size:8.3px;color:#3a3a3a;">Gloves, Coated W...</div>
<div class="t " style="left:120.10px;top:974.00px;font-size:8.6px;color:#3a3a3a;">12</div>
<div class="t " style="left:206.70px;top:974.00px;font-size:8.6px;color:#3a3a3a;">8</div>
<div class="t " style="left:292.70px;top:974.00px;font-size:8.56px;color:#3a3a3a;">Tony Yother tony.y...</div>
<div class="t " style="left:491.70px;top:974.00px;font-size:8.82px;color:#3a3a3a;">8/1/2025, 3:51 PM</div>
<div class="t " style="left:591.60px;top:974.00px;font-size:8.9px;color:#3558a8;letter-spacing:0.1px;-webkit-text-stroke:0.2px #3558a8">03805407638</div>
<div class="t " style="left:691.20px;top:974.00px;font-size:8.6px;color:#3a3a3a;">380L-08</div>
<div class="t " style="left:890.70px;top:974.00px;font-size:8.3px;color:#3a3a3a;">Gloves, Coated W...</div>
<div class="r" style="left:990.30px;top:971.87px;width:77.80px;height:13.20px;background:#e6e6e6;border-radius:1px"></div>
<div class="t" style="left:994.6px;top:974px;font-size:8.59px;color:#9a9a9a">Main Storeroom <span style="color:#555">A6</span></div>
<div class="t " style="left:1189.00px;top:974.00px;font-size:8.62px;color:#3558a8;-webkit-text-stroke:0.2px #3558a8">Demo</div>
<div class="t " style="left:1319.30px;top:974.00px;font-size:8.4px;color:#3a3a3a;">PUT_AWAY</div>
<div class="t " style="left:20.70px;top:1001.00px;font-size:8.3px;color:#3a3a3a;">Gloves, Coated W...</div>
<div class="t " style="left:120.10px;top:1001.00px;font-size:8.6px;color:#3a3a3a;">6</div>
<div class="t " style="left:206.70px;top:1001.00px;font-size:8.6px;color:#3a3a3a;">4</div>
<div class="t " style="left:292.70px;top:1001.00px;font-size:8.56px;color:#3a3a3a;">Tony Yother tony.y...</div>
<div class="t " style="left:491.70px;top:1001.00px;font-size:8.82px;color:#3a3a3a;">8/1/2025, 3:51 PM</div>
<div class="t " style="left:591.60px;top:1001.00px;font-size:8.9px;color:#3558a8;letter-spacing:0.1px;-webkit-text-stroke:0.2px #3558a8">03805407637</div>
<div class="t " style="left:691.20px;top:1001.00px;font-size:8.6px;color:#3a3a3a;">380M-07</div>
<div class="t " style="left:890.70px;top:1001.00px;font-size:8.3px;color:#3a3a3a;">Gloves, Coated W...</div>
<div class="r" style="left:990.30px;top:999.04px;width:77.80px;height:13.20px;background:#e6e6e6;border-radius:1px"></div>
<div class="t" style="left:994.6px;top:1001px;font-size:8.59px;color:#9a9a9a">Main Storeroom <span style="color:#555">A5</span></div>
<div class="t " style="left:1189.00px;top:1001.00px;font-size:8.62px;color:#3558a8;-webkit-text-stroke:0.2px #3558a8">Demo</div>
<div class="t " style="left:1319.30px;top:1001.00px;font-size:8.4px;color:#3a3a3a;">PUT_AWAY</div>
<div class="t " style="left:20.70px;top:1029.00px;font-size:8.3px;color:#3a3a3a;">Gloves, Coated W...</div>
<div class="t " style="left:120.10px;top:1029.00px;font-size:8.6px;color:#3a3a3a;">5</div>
<div class="t " style="left:206.70px;top:1029.00px;font-size:8.6px;color:#3a3a3a;">3</div>
<div class="t " style="left:292.70px;top:1029.00px;font-size:8.56px;color:#3a3a3a;">Tony Yother tony.y...</div>
<div class="t " style="left:491.70px;top:1029.00px;font-size:8.82px;color:#3a3a3a;">8/1/2025, 3:51 PM</div>
<div class="t " style="left:591.60px;top:1029.00px;font-size:8.9px;color:#3558a8;letter-spacing:0.1px;-webkit-text-stroke:0.2px #3558a8">03805407636</div>
<div class="t " style="left:691.20px;top:1029.00px;font-size:8.6px;color:#3a3a3a;">380S-06</div>
<div class="t " style="left:890.70px;top:1029.00px;font-size:8.3px;color:#3a3a3a;">Gloves, Coated W...</div>
<div class="r" style="left:990.30px;top:1026.21px;width:77.80px;height:13.20px;background:#e6e6e6;border-radius:1px"></div>
<div class="t" style="left:994.6px;top:1029px;font-size:8.59px;color:#9a9a9a">Main Storeroom <span style="color:#555">A4</span></div>
<div class="t " style="left:1189.00px;top:1029.00px;font-size:8.62px;color:#3558a8;-webkit-text-stroke:0.2px #3558a8">Demo</div>
<div class="t " style="left:1319.30px;top:1029.00px;font-size:8.4px;color:#3a3a3a;">PUT_AWAY</div>
<div class="t " style="left:20.70px;top:1056.00px;font-size:8.3px;color:#3a3a3a;">Gloves, Drivers; C...</div>
<div class="t " style="left:120.10px;top:1056.00px;font-size:8.6px;color:#3a3a3a;">16</div>
<div class="t " style="left:206.70px;top:1056.00px;font-size:8.6px;color:#3a3a3a;">4</div>
<div class="t " style="left:292.70px;top:1056.00px;font-size:8.56px;color:#3a3a3a;">Tony Yother tony.y...</div>
<div class="t " style="left:491.70px;top:1056.00px;font-size:8.82px;color:#3a3a3a;">8/1/2025, 3:51 PM</div>
<div class="t " style="left:591.60px;top:1056.00px;font-size:8.9px;color:#3558a8;letter-spacing:0.1px;-webkit-text-stroke:0.2px #3558a8">01333290769</div>
<div class="t " style="left:691.20px;top:1056.00px;font-size:8.6px;color:#3a3a3a;">97KS</div>
<div class="t " style="left:890.70px;top:1056.00px;font-size:8.3px;color:#3a3a3a;">Gloves, Drivers; C...</div>
<div class="r" style="left:990.30px;top:1053.38px;width:77.80px;height:13.20px;background:#e6e6e6;border-radius:1px"></div>
<div class="t" style="left:994.6px;top:1056px;font-size:8.59px;color:#9a9a9a">Main Storeroom <span style="color:#555">A1</span></div>
<div class="t " style="left:1189.00px;top:1056.00px;font-size:8.62px;color:#3558a8;-webkit-text-stroke:0.2px #3558a8">Demo</div>
<div class="t " style="left:1319.30px;top:1056.00px;font-size:8.4px;color:#3a3a3a;">PUT_AWAY</div>
<div class="t " style="left:20.70px;top:1083.00px;font-size:8.3px;color:#3a3a3a;">Gloves, Drivers; C...</div>
<div class="t " style="left:120.10px;top:1083.00px;font-size:8.6px;color:#3a3a3a;">40</div>
<div class="t " style="left:206.70px;top:1083.00px;font-size:8.6px;color:#3a3a3a;">39</div>
<div class="t " style="left:292.70px;top:1083.00px;font-size:8.54px;color:#3558a8;-webkit-text-stroke:0.35px #3558a8">Tony Y tony.yother...</div>
<div class="r" style="left:392.80px;top:1078.55px;width:78.60px;height:15.70px;background:#e9e9ef;border-radius:1px"></div>
<div class="t " style="left:396.30px;top:1083.00px;font-size:8.9px;color:#6a7cb8;">Work Order 45789</div>
<div class="t " style="left:491.70px;top:1083.00px;font-size:8.82px;color:#3a3a3a;">7/18/2025, 2:10 PM</div>
<div class="t " style="left:591.60px;top:1083.00px;font-size:8.9px;color:#3558a8;letter-spacing:0.1px;-webkit-text-stroke:0.2px #3558a8">01333290770</div>
<div class="t " style="left:691.20px;top:1083.00px;font-size:8.6px;color:#3a3a3a;">97KXXL</div>
<div class="t " style="left:890.70px;top:1083.00px;font-size:8.3px;color:#3a3a3a;">Gloves, Drivers; C...</div>
<div class="r" style="left:990.30px;top:1080.55px;width:77.80px;height:13.20px;background:#e6e6e6;border-radius:1px"></div>
<div class="t" style="left:994.6px;top:1083px;font-size:8.59px;color:#9a9a9a">Main Storeroom <span style="color:#555">A3</span></div>
<div class="t " style="left:1319.30px;top:1083.00px;font-size:8.4px;color:#3a3a3a;">RETURN</div>
<div class="t " style="left:20.70px;top:1110.00px;font-size:8.3px;color:#3a3a3a;">Gloves, Drivers; C...</div>
<div class="t " style="left:120.10px;top:1110.00px;font-size:8.6px;color:#3a3a3a;">39</div>
<div class="t " style="left:206.70px;top:1110.00px;font-size:8.6px;color:#3a3a3a;">37</div>
<div class="t " style="left:292.70px;top:1110.00px;font-size:8.54px;color:#3558a8;-webkit-text-stroke:0.35px #3558a8">Tony Y tony.yother...</div>
<div class="r" style="left:392.80px;top:1105.72px;width:78.60px;height:15.70px;background:#e9e9ef;border-radius:1px"></div>
<div class="t " style="left:396.30px;top:1110.00px;font-size:8.9px;color:#6a7cb8;">Work Order 45789</div>
<div class="t " style="left:491.70px;top:1110.00px;font-size:8.82px;color:#3a3a3a;">7/17/2025, 3:54 PM</div>
<div class="t " style="left:591.60px;top:1110.00px;font-size:8.9px;color:#3558a8;letter-spacing:0.1px;-webkit-text-stroke:0.2px #3558a8">01333290770</div>
<div class="t " style="left:691.20px;top:1110.00px;font-size:8.6px;color:#3a3a3a;">97KXXL</div>
<div class="t " style="left:890.70px;top:1110.00px;font-size:8.3px;color:#3a3a3a;">Gloves, Drivers; C...</div>
<div class="r" style="left:990.30px;top:1107.72px;width:77.80px;height:13.20px;background:#e6e6e6;border-radius:1px"></div>
<div class="t" style="left:994.6px;top:1110px;font-size:8.59px;color:#9a9a9a">Main Storeroom <span style="color:#555">A3</span></div>
<div class="t " style="left:1319.30px;top:1110.00px;font-size:8.4px;color:#3a3a3a;">RETURN</div>
<div class="r" style="left:990.30px;top:1133.00px;width:77.80px;height:2.00px;background:#f1f1f1"></div>
<svg style="left:1409.4px;top:911.5px" width="6" height="4" viewBox="0 0 6 4"><path d="M0,3.5 L3,0 L6,3.5Z" fill="#b0b0b0"/></svg>
<div class="r" style="left:1409.80px;top:919.80px;width:4.80px;height:166.20px;background:#a8a8a8;border-radius:2px"></div>
<svg style="left:1409.4px;top:1128px" width="6" height="4" viewBox="0 0 6 4"><path d="M0,0 L6,0 L3,3.8Z" fill="#b0b0b0"/></svg>
<svg style="left:11.8px;top:1136px" width="4.5" height="5" viewBox="0 0 4.5 5"><path d="M4.5,0 L4.5,5 L0,2.5Z" fill="#b0b0b0"/></svg>
<div class="r" style="left:20.00px;top:1136.00px;width:809.00px;height:5.00px;background:#a8a8a8;border-radius:2.5px"></div>
<svg style="left:1401.5px;top:1136px" width="4.5" height="5" viewBox="0 0 4.5 5"><path d="M0,0 L0,5 L4.5,2.5Z" fill="#b0b0b0"/></svg>
<svg style="left:18.6px;top:1152.6px" width="12.5" height="12.6" viewBox="0 0 12.5 12.6"><path d="M6.25,0.8 L11.6,4.6 L6.25,8.4 L0.9,4.6 Z" fill="none" stroke="#555" stroke-width="1.2" stroke-linejoin="round"/><path d="M0.9,7.6 L6.25,11.6 L11.6,7.6" fill="none" stroke="#555" stroke-width="1.2" stroke-linejoin="round"/></svg>
<svg style="left:51.2px;top:1152.4px" width="12" height="12.8" viewBox="0 0 12 12.8"><path d="M6,3 A4.4,4.4 0 1 1 1.6,7.4" fill="none" stroke="#555" stroke-width="1.3"/><path d="M3.4,3 L6.6,0.6 L6.6,5.4 Z" fill="#555"/></svg>
<div class="t " style="left:73.00px;top:1155.00px;font-size:8.64px;color:#555;">Rows per page:</div>
<div class="t " style="left:145.50px;top:1155.00px;font-size:8.6px;color:#444;">10</div>
<svg style="left:158.8px;top:1157.6px" width="7" height="4" viewBox="0 0 7 4"><path d="M0,0 L7,0 L3.5,3.6Z" fill="#555"/></svg>
<svg style="left:1368.5px;top:1155.3px" width="5" height="8" viewBox="0 0 5 8"><path d="M4.2,0.6 L1,4 L4.2,7.4" fill="none" stroke="#c2c2c2" stroke-width="1.1"/></svg>
<div class="r" style="left:1380.80px;top:1151.20px;width:16.80px;height:16.40px;background:#dcdcdc;border-radius:2px"></div>
<div class="t " style="left:1389.20px;top:1156.00px;font-size:8.6px;color:#333;font-weight:700;transform:translateX(-50%)">1</div>
<svg style="left:1405.5px;top:1155.3px" width="5" height="8" viewBox="0 0 5 8"><path d="M0.8,0.6 L4,4 L0.8,7.4" fill="none" stroke="#b0b0b0" stroke-width="1.1"/></svg>
<div class="r" style="left:1071.1px;top:91.2px;width:343.7px;height:220.3px;background:#fff;box-shadow:0 2px 4px rgba(0,0,0,.18),0 0 2px rgba(0,0,0,.08)"></div>
<div class="r" style="left:1082.00px;top:101.50px;width:1.10px;height:10.80px;background:#333"></div>
<div class="t " style="left:1083.60px;top:103.00px;font-size:9.34px;color:#b4b4b4;">Search</div>
<svg style="left:1387.5px;top:102.4px" width="11.5" height="9.5" viewBox="0 0 11.5 9.5"><circle cx="4" cy="3.8" r="3.1" fill="none" stroke="#8e8e8e" stroke-width="1.3"/><path d="M6.3,6 L10.8,9.2" stroke="#8e8e8e" stroke-width="1.5"/></svg>
<div class="r" style="left:1071.10px;top:122.60px;width:343.70px;height:1.00px;background:#e6e6e6"></div>
<div class="r" style="left:1071.10px;top:199.20px;width:343.70px;height:40.00px;background:#f3f3f3"></div>
<div class="r" style="left:1082.1px;top:136.70px;width:11.6px;height:10.2px;border:1.4px solid #5c5c5c;border-radius:1px"></div>
<div class="t " style="left:1102.20px;top:133.00px;font-size:9.0px;color:#333;">All</div>
<div class="t " style="left:1102.20px;top:144.00px;font-size:7.8px;color:#8a8a8a;">3 shiptos</div>
<div class="r" style="left:1082.1px;top:174.00px;width:11.6px;height:10.2px;border:1.4px solid #5c5c5c;border-radius:1px"></div>
<div class="t " style="left:1102.20px;top:164.00px;font-size:8.98px;color:#3a3a3a;">MM Team Test Room (Replenishment)</div>
<div class="t " style="left:1102.20px;top:175.00px;font-size:8.53px;color:#9a9a9a;">LM24601-001 | WESCO</div>
<div class="t " style="left:1102.20px;top:186.00px;font-size:8.2px;color:#9a9a9a;">82935, US, WY, Narnia, Spare Oom</div>
<svg style="left:1082.1px;top:215.00px" width="11.6" height="10.2" viewBox="0 0 11.6 10.2"><rect x="0" y="0" width="11.6" height="10.2" rx="1" fill="#1f2733"/><path d="M2.3,5 L4.7,7.3 L9.4,2.6" fill="none" stroke="#fff" stroke-width="1.4"/></svg>
<div class="t " style="left:1102.20px;top:206.00px;font-size:9.01px;color:#3a3a3a;">MM Team Test (Checkout)</div>
<div class="t " style="left:1102.20px;top:216.00px;font-size:8.49px;color:#9a9a9a;">546681-01 | WESCO</div>
<div class="t " style="left:1102.20px;top:226.00px;font-size:8.5px;color:#9a9a9a;">5679895849684, AF, BAM, TBD, TBD</div>
<div class="r" style="left:1082.1px;top:256.10px;width:11.6px;height:10.2px;border:1.4px solid #5c5c5c;border-radius:1px"></div>
<div class="t " style="left:1102.20px;top:247.00px;font-size:9.0px;color:#3a3a3a;">001</div>
<div class="t " style="left:1102.20px;top:257.00px;font-size:8.45px;color:#9a9a9a;">001 | Customer Supplier</div>
<div class="t " style="left:1102.20px;top:268.00px;font-size:7.98px;color:#9a9a9a;">T5S 2P2, US, AL, Calgary, C12, 6215 - 3rd ST SE</div>
<div class="t " style="left:1326.70px;top:294.00px;font-size:7.98px;color:#444;letter-spacing:0.2px">RESET</div>
<div class="t " style="left:1374.70px;top:294.00px;font-size:8.2px;color:#444;letter-spacing:0.2px">APPLY</div>
</body></html>
